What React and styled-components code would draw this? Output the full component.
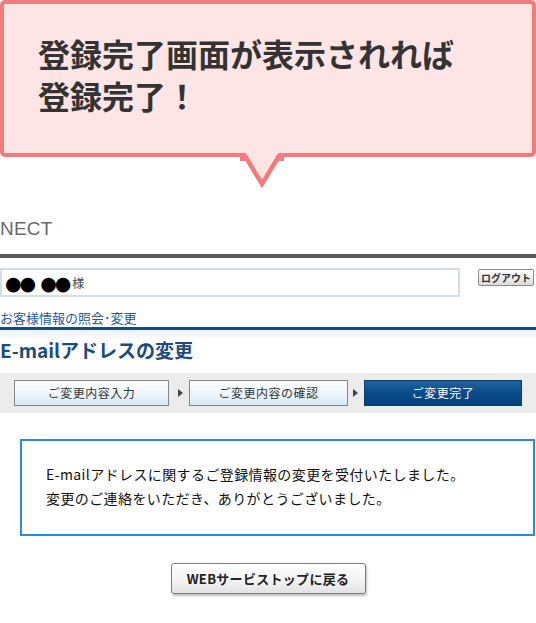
import React from "react";
import styled, { createGlobalStyle } from "styled-components";

const Global = createGlobalStyle`
  html, body { margin: 0; padding: 0; background: #fff; }
  body { font-family: "Noto Sans CJK JP", "Noto Sans", sans-serif; }
`;

const Page = styled.div`
  width: 536px;
  display: flex;
  flex-direction: column;
`;

const Callout = styled.div`
  position: relative;
  height: 157px;
  box-sizing: border-box;
  border: 4px solid #f47b7b;
  border-radius: 5px;
  background: #fde5e5;
  padding: 28px 0 0 34px;
`;

const CalloutText = styled.div`
  font-size: 32px;
  line-height: 42px;
  font-weight: 700;
  color: #333;
`;

const Tail = styled.svg`
  position: absolute;
  left: 236px;
  top: 148px;
  overflow: visible;
`;

const Logo = styled.div`
  margin-top: 62px;
  font-family: "Liberation Sans Narrow", "Liberation Sans", sans-serif;
  font-size: 19px;
  line-height: 20px;
  color: #6a6a6a;
  letter-spacing: 0.2px;
`;

const DarkBar = styled.div`
  margin-top: 15px;
  height: 4px;
  background: #5b5757;
`;

const NameRow = styled.div`
  margin-top: 10px;
  display: flex;
  justify-content: space-between;
  align-items: flex-start;
  padding-right: 2px;
`;

const NameBox = styled.div`
  width: 460px;
  height: 29px;
  box-sizing: border-box;
  border: 2px solid #d4dee9;
  display: flex;
  align-items: center;
  padding-left: 3px;
  color: #333;
`;

const Dots = styled.span`
  font-family: "DejaVu Sans", sans-serif;
  font-size: 19px;
  line-height: 20px;
  letter-spacing: -2px;
  color: #000;
  margin-right: ${(p) => p.$mr}px;
`;

const Sama = styled.span`
  font-size: 12px;
  color: #444;
`;

const LogoutButton = styled.button`
  margin-top: 1px;
  width: 56px;
  height: 17px;
  box-sizing: border-box;
  border: 1px solid #8a8a8a;
  border-radius: 2px;
  background: linear-gradient(#ffffff, #dcdcdc);
  padding: 0;
  font-family: "Noto Sans CJK JP", sans-serif;
  font-size: 10px;
  font-weight: 700;
  line-height: 15px;
  color: #333;
`;

const SubNav = styled.div`
  margin-top: 13px;
  font-size: 13px;
  line-height: 16px;
  color: #1f5b98;
`;

const BlueRule = styled.div`
  margin-top: 1px;
  height: 3px;
  background: #0c4f8d;
`;

const HeadingArea = styled.div`
  background: linear-gradient(#efefef, #ffffff 10px);
  padding-top: 8px;
`;

const Heading = styled.h1`
  margin: 0;
  font-size: 19px;
  line-height: 24px;
  font-weight: 700;
  color: #1c4b7e;
`;

const StepBar = styled.div`
  margin-top: 11px;
  height: 40px;
  box-sizing: border-box;
  background: #ececec;
  display: flex;
  align-items: center;
  padding-left: 14px;
`;

const Step = styled.div`
  width: ${(p) => p.$w}px;
  height: 26px;
  box-sizing: border-box;
  border: 1px solid ${(p) => (p.$active ? "#0a3f73" : "#858585")};
  background: ${(p) =>
    p.$active
      ? "linear-gradient(#1d64a6, #0b4b89 50%, #06427d)"
      : "linear-gradient(#ffffff, #eef6fc 50%, #d6eaf8)"};
  color: ${(p) => (p.$active ? "#fff" : "#333")};
  font-size: 12px;
  line-height: 24px;
  text-align: center;
  letter-spacing: 0.5px;
`;

const Arrow = styled.div`
  width: 0;
  height: 0;
  border-left: 5px solid #444;
  border-top: 4px solid transparent;
  border-bottom: 4px solid transparent;
  margin: 0 ${(p) => p.$mr}px 0 ${(p) => p.$ml}px;
`;

const MessageBox = styled.div`
  margin: 26px 1px 0 20px;
  height: 97px;
  box-sizing: border-box;
  border: 2px solid #2b8ae0;
  padding: 21px 0 0 24px;
`;

const Message = styled.p`
  margin: 0;
  font-size: 14px;
  line-height: 24px;
  letter-spacing: 0.4px;
  color: #111;
`;

const ButtonRow = styled.div`
  margin-top: 27px;
  display: flex;
  justify-content: center;
  padding-bottom: 28px;
`;

const BackButton = styled.button`
  width: 195px;
  height: 31px;
  box-sizing: border-box;
  border: 1px solid #7d7d7d;
  border-radius: 3px;
  background: linear-gradient(#ffffff, #f2f2f2 60%, #e2e2e2);
  box-shadow: 1px 2px 2px rgba(0, 0, 0, 0.25);
  font-family: "Noto Sans CJK JP", sans-serif;
  font-size: 13px;
  font-weight: 700;
  letter-spacing: 0.3px;
  color: #222;
  padding: 0;
`;

export default function App() {
  return (
    <>
      <Global />
      <Page>
        <Callout>
          <CalloutText>
            登録完了画面が表示されれば
            <br />
            登録完了！
          </CalloutText>
          <Tail width="44" height="40" viewBox="0 0 44 40">
            <polygon points="5,0 39,0 22,31" fill="#fde5e5" />
            <polyline
              points="5,4 22,32 39,4"
              fill="none"
              stroke="#f47b7b"
              strokeWidth="4.5"
              strokeLinejoin="miter"
            />
            <rect x="0" y="4" width="6" height="5" fill="#f47b7b" />
            <rect x="38" y="4" width="6" height="5" fill="#f47b7b" />
          </Tail>
        </Callout>

        <Logo>NECT</Logo>
        <DarkBar />

        <NameRow>
          <NameBox>
            <Dots $mr={6}>●●</Dots>
            <Dots $mr={3}>●●</Dots>
            <Sama>様</Sama>
          </NameBox>
          <LogoutButton>ログアウト</LogoutButton>
        </NameRow>

        <SubNav>お客様情報の照会･変更</SubNav>
        <BlueRule />

        <HeadingArea>
          <Heading>E-mailアドレスの変更</Heading>
        </HeadingArea>

        <StepBar>
          <Step $w={155}>ご変更内容入力</Step>
          <Arrow $ml={9} $mr={6} />
          <Step $w={159}>ご変更内容の確認</Step>
          <Arrow $ml={5} $mr={6} />
          <Step $w={158} $active>
            ご変更完了
          </Step>
        </StepBar>

        <MessageBox>
          <Message>
            E-mailアドレスに関するご登録情報の変更を受付いたしました。
            <br />
            変更のご連絡をいただき、ありがとうございました。
          </Message>
        </MessageBox>

        <ButtonRow>
          <BackButton>WEBサービストップに戻る</BackButton>
        </ButtonRow>
      </Page>
    </>
  );
}
